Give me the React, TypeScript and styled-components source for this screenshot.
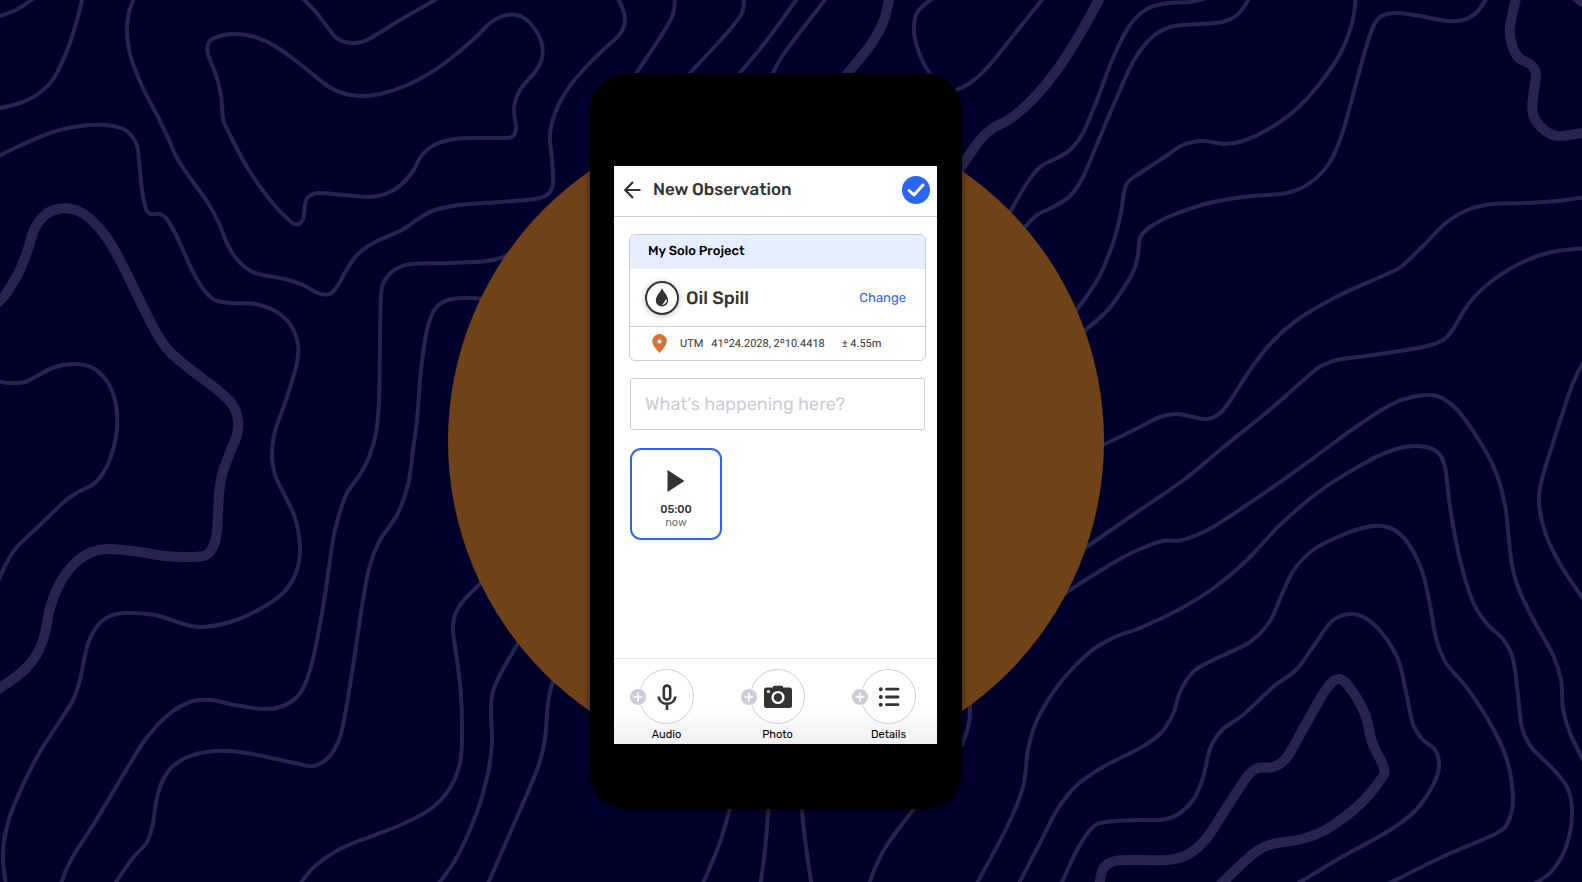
import React from "react";
import styled, { createGlobalStyle, css } from "styled-components";

type Point = [number, number];
interface Contour {
  points: Point[];
  heavy?: boolean;
  closed?: boolean;
}

const contours: Contour[] = [
  { points: [[-6, 17], [0, 16], [18, 9], [34, -2]] },
  { points: [[83, -4], [77, 20], [68, 48], [54, 78], [38, 94], [20, 103], [0, 108], [-6, 109]] },
  {
    points: [
      [135, -4], [129, 12], [127, 32], [131, 58], [143, 88], [158, 117], [169, 140], [176, 156], [188, 175],
      [206, 200], [218, 221], [226, 241], [235, 257], [249, 270], [263, 275], [285, 279], [303, 285], [318, 293],
      [330, 294], [338, 285], [347, 269], [358, 254], [375, 242], [402, 230], [418, 219], [435, 210], [460, 205],
      [500, 202], [535, 199], [548, 194], [553, 183], [552, 160], [550, 135], [555, 113], [567, 90], [585, 68],
      [603, 50], [620, 34], [625, 20], [622, 7], [617, -3],
    ],
  },
  { points: [[299, -5], [315, 11], [328, 28], [338, 39], [352, 43], [367, 40], [400, 20], [435, 0], [445, -6]] },
  {
    closed: true,
    points: [
      [209, 42], [220, 36], [237, 34], [255, 37], [275, 46], [300, 64], [325, 84], [342, 93], [360, 96],
      [380, 94], [405, 86], [430, 73], [450, 59], [475, 38], [490, 23], [503, 16], [517, 15], [530, 23], [541, 41],
      [542, 58], [535, 72], [520, 90], [514, 108], [516, 128], [513, 136], [505, 138], [480, 138], [455, 139],
      [436, 144], [422, 155], [413, 171], [402, 184], [388, 193], [370, 197], [345, 195], [318, 193], [308, 197],
      [305, 205], [303, 219], [298, 224], [290, 221], [270, 200], [247, 167], [227, 129], [223, 118], [221, 95],
      [216, 75], [208, 54],
    ],
  },
  {
    points: [
      [-5, 158], [15, 148], [50, 133], [80, 126], [105, 125], [125, 130], [136, 143], [139, 160], [142, 190],
      [146, 209], [151, 214], [160, 214], [167, 219], [177, 237], [192, 270], [204, 290], [215, 300], [230, 303],
      [255, 304], [275, 311], [290, 324], [298, 345], [296, 367], [285, 403], [275, 431], [272, 453], [275, 475],
      [285, 496], [295, 518], [300, 548], [296, 573], [283, 593], [260, 609], [230, 622], [200, 627], [180, 623],
      [155, 615], [127, 613], [110, 616], [98, 625], [89, 641], [84, 660], [80, 680], [73, 700], [60, 721],
      [37, 757], [14, 805], [5, 835], [3, 860], [6, 886],
    ],
  },
  {
    heavy: true,
    points: [
      [-6, 306], [5, 295], [18, 274], [27, 252], [34, 230], [45, 215], [58, 209], [72, 209], [88, 217],
      [107, 238], [123, 266], [140, 301], [157, 334], [170, 352], [190, 369], [215, 388], [232, 404], [238, 420],
      [237, 435], [231, 450], [222, 475], [219, 495], [217, 530], [214, 545], [206, 555], [190, 557], [165, 556],
      [140, 552], [110, 549], [92, 552], [75, 563], [60, 583], [50, 608], [45, 633], [37, 654], [22, 672],
      [0, 688], [-8, 693],
    ],
  },
  {
    points: [
      [-4, 381], [10, 383], [25, 382], [37, 376], [55, 367], [75, 364], [93, 368], [108, 383], [116, 405],
      [117, 428], [113, 450], [106, 468], [95, 483], [80, 491], [65, 501], [40, 525], [16, 548], [5, 566], [-3, 584],
    ],
  },
  {
    points: [
      [515, 250], [503, 257], [487, 261], [450, 263], [412, 264], [396, 269], [385, 280], [381, 295], [380, 340],
      [379, 400], [376, 433], [369, 457], [359, 476], [347, 493], [339, 515], [333, 540], [325, 595], [315, 650],
      [306, 682], [296, 698], [280, 707], [262, 709], [235, 705], [210, 700], [190, 702], [168, 715], [145, 740],
      [125, 772], [95, 822], [75, 853], [66, 870], [60, 887],
    ],
  },
  {
    points: [
      [485, 299], [466, 298], [448, 300], [435, 309], [427, 330], [421, 370], [417, 420], [413, 450], [408, 485],
      [397, 515], [380, 540], [370, 565], [363, 600], [354, 660], [345, 715], [339, 740], [328, 758], [313, 766],
      [295, 763], [267, 757], [240, 752], [215, 751], [190, 756], [172, 767], [162, 782], [156, 802], [153, 823],
      [147, 842], [132, 859], [114, 885],
    ],
  },
  {
    points: [
      [299, 886], [313, 868], [340, 849], [375, 835], [405, 823], [432, 808], [450, 788], [460, 763], [462, 735],
      [461, 695], [457, 660], [453, 630], [455, 615], [464, 600], [482, 582], [495, 570],
    ],
  },
  { points: [[437, 886], [457, 857], [477, 812], [488, 773], [492, 742], [491, 707], [496, 683], [517, 645], [526, 630]] },
  { points: [[487, 886], [510, 833], [537, 770], [545, 738], [548, 703], [553, 682], [562, 668]] },
  { points: [[675, -4], [673, 14], [663, 33], [637, 72], [630, 83]] },
  { points: [[744, -4], [742, 13], [727, 33], [690, 73], [680, 84]] },
  { points: [[799, -4], [767, 40], [740, 73], [731, 84]] },
  { points: [[828, -4], [800, 32], [781, 58], [773, 73], [768, 84]] },
  { heavy: true, points: [[890, -5], [884, 20], [872, 43], [848, 73], [838, 85]] },
  { points: [[936, -4], [918, 11], [914, 27], [916, 43], [923, 62], [930, 74], [938, 84]] },
  { points: [[1045, -4], [1013, 36], [987, 68], [970, 83], [956, 90], [945, 94]] },
  {
    heavy: true,
    points: [[1102, -6], [1080, 34], [1057, 70], [1033, 99], [1010, 119], [993, 128], [980, 140], [963, 164], [952, 182]],
  },
  {
    points: [
      [1000, 230], [1010, 212], [1027, 183], [1040, 167], [1057, 158], [1070, 150], [1083, 133], [1097, 100],
      [1113, 58], [1130, 25], [1147, 9], [1167, 3], [1190, 2], [1209, -3],
    ],
  },
  {
    points: [
      [1015, 240], [1025, 227], [1037, 215], [1053, 207], [1070, 196], [1083, 177], [1100, 137], [1117, 97],
      [1133, 62], [1150, 39], [1170, 27], [1200, 24], [1222, 22], [1237, 15], [1247, 2], [1250, -5],
    ],
  },
  {
    points: [
      [1356, -4], [1352, 23], [1340, 54], [1317, 87], [1293, 112], [1267, 130], [1243, 141], [1225, 144],
      [1203, 141], [1183, 145], [1163, 158], [1140, 173], [1128, 182], [1124, 192], [1121, 213], [1113, 243],
      [1100, 275], [1084, 300], [1070, 318],
    ],
  },
  {
    points: [
      [1488, -4], [1477, 12], [1463, 20], [1447, 21], [1420, 16], [1397, 13], [1380, 17], [1370, 35], [1357, 80],
      [1343, 131], [1330, 162], [1310, 183], [1287, 193], [1253, 196], [1213, 202], [1173, 215], [1150, 227],
      [1140, 238], [1138, 255], [1133, 272], [1117, 298], [1103, 315], [1078, 336],
    ],
  },
  {
    heavy: true,
    points: [
      [1517, -6], [1510, 27], [1512, 45], [1519, 58], [1530, 64], [1536, 74], [1533, 97], [1533, 114], [1542, 128],
      [1557, 136], [1582, 133], [1592, 130],
    ],
  },
  { heavy: true, points: [[1570, -8], [1590, 8]] },
  {
    points: [
      [1588, 197], [1557, 201], [1527, 203], [1493, 204], [1470, 209], [1447, 222], [1423, 246], [1402, 266],
      [1387, 274], [1340, 295], [1300, 318], [1273, 341], [1250, 370], [1230, 401], [1219, 414], [1207, 419],
      [1193, 417], [1177, 414], [1160, 417], [1140, 427], [1103, 445], [1088, 452],
    ],
  },
  {
    points: [
      [1588, 248], [1552, 252], [1523, 262], [1493, 280], [1470, 302], [1453, 329], [1443, 340], [1423, 347],
      [1373, 355], [1337, 360], [1321, 366], [1307, 377], [1273, 407], [1220, 450], [1185, 479], [1140, 510],
      [1088, 546], [1075, 555],
    ],
  },
  {
    points: [
      [1052, 603], [1067, 592], [1095, 574], [1120, 559], [1140, 549], [1163, 541], [1182, 540], [1213, 527],
      [1273, 487], [1323, 451], [1353, 429], [1390, 405], [1412, 397], [1430, 395], [1442, 398], [1460, 413],
      [1485, 450], [1497, 475], [1505, 505], [1509, 540], [1512, 565], [1518, 587], [1533, 619], [1553, 655],
      [1561, 680], [1563, 709], [1570, 733], [1588, 770],
    ],
  },
  {
    points: [
      [975, 887], [1007, 827], [1023, 787], [1028, 750], [1037, 720], [1060, 683], [1090, 652], [1115, 637],
      [1140, 628], [1180, 609], [1215, 587], [1247, 560], [1280, 525], [1320, 491], [1363, 464], [1393, 450],
      [1417, 446], [1436, 451], [1445, 467], [1450, 507], [1460, 560], [1473, 602], [1487, 624], [1503, 639],
      [1513, 659], [1518, 695], [1522, 728], [1532, 748], [1553, 769], [1568, 789], [1572, 815], [1566, 847],
      [1551, 872], [1530, 886],
    ],
  },
  {
    points: [
      [1017, 887], [1040, 843], [1057, 810], [1077, 785], [1103, 767], [1140, 748], [1160, 734], [1173, 714],
      [1180, 692], [1193, 672], [1213, 660], [1250, 642], [1270, 621], [1282, 594], [1294, 570], [1313, 550],
      [1340, 536], [1367, 527], [1387, 527], [1404, 538], [1421, 568], [1430, 605], [1436, 638], [1446, 663],
      [1467, 688], [1490, 723], [1507, 760], [1513, 799], [1508, 822], [1495, 834], [1440, 858], [1382, 887],
    ],
  },
  {
    points: [
      [1060, 887], [1076, 852], [1091, 829], [1105, 822], [1140, 820], [1160, 820], [1177, 815], [1193, 800],
      [1203, 778], [1210, 749], [1222, 730], [1243, 715], [1273, 687], [1296, 670], [1313, 647], [1332, 621],
      [1350, 614], [1367, 619], [1385, 637], [1399, 662], [1407, 697], [1413, 724], [1422, 739], [1435, 750],
      [1439, 766], [1433, 785], [1415, 811], [1387, 832], [1340, 858], [1292, 887],
    ],
  },
  {
    heavy: true,
    points: [
      [1099, 888], [1103, 869], [1115, 861], [1140, 860], [1167, 860], [1187, 855], [1206, 839], [1227, 807],
      [1247, 777], [1258, 768], [1273, 767], [1287, 757], [1307, 722], [1327, 688], [1339, 679], [1350, 688],
      [1365, 714], [1372, 742], [1384, 768], [1381, 779], [1360, 804], [1327, 829], [1302, 839], [1273, 844],
      [1253, 854], [1217, 888],
    ],
  },
  { points: [[1588, 355], [1573, 383], [1553, 443], [1542, 479], [1539, 502], [1545, 532], [1560, 564], [1588, 606]] },
  { points: [[732, 800], [729, 812], [719, 845], [701, 888]] },
  { points: [[769, 800], [768, 815], [765, 850], [760, 888]] },
  { points: [[801, 800], [802, 812], [806, 847], [812, 888]] },
  { points: [[923, 798], [913, 810], [887, 845], [875, 868], [868, 888]] },
  { points: [[970, 690], [970, 707], [969, 723], [962, 744], [950, 762]] },
];

/* Turns a list of survey points into a smooth cubic path (Catmull-Rom). */
function toPath({ points, closed }: Contour): string {
  const n = points.length;
  const at = (i: number): Point =>
    closed ? points[(i + n) % n] : points[Math.max(0, Math.min(n - 1, i))];
  let d = `M${points[0].join(" ")}`;
  const segments = closed ? n : n - 1;
  for (let i = 0; i < segments; i++) {
    const [a, b, c, e] = [at(i - 1), at(i), at(i + 1), at(i + 2)];
    const c1 = [b[0] + (c[0] - a[0]) / 6, b[1] + (c[1] - a[1]) / 6];
    const c2 = [c[0] - (e[0] - b[0]) / 6, c[1] - (e[1] - b[1]) / 6];
    d += `C${c1.join(" ")} ${c2.join(" ")} ${c.join(" ")}`;
  }
  return closed ? d + "Z" : d;
}

const color = {
  night: "#00002d",
  contour: "#272550",
  brown: "#704217",
  ink: "#333333",
  line: "#ccccd6",
  blue: "#2a66f5",
  sky: "#e5eeff",
  pin: "#d9703a",
};

const GlobalStyle = createGlobalStyle`
  *, *::before, *::after { box-sizing: border-box; }
  body {
    margin: 0;
    background: ${color.night};
    color: ${color.ink};
    font-family: "Rubik", "Roboto", sans-serif;
    text-rendering: geometricPrecision;
  }
  button { font: inherit; color: inherit; background: none; border: 0; padding: 0; cursor: pointer; }
`;

const Stage = styled.main`
  position: relative;
  display: grid;
  place-items: center;
  min-height: 100vh;
  padding-right: 30px;
  overflow: hidden;
`;

const ContourMap = styled.svg`
  position: absolute;
  inset: 0;
  width: 100%;
  height: 100%;
  fill: none;
  stroke: ${color.contour};
`;

const Disc = styled.div`
  position: relative;
  grid-area: 1 / 1;
  width: 656px;
  aspect-ratio: 1;
  border-radius: 50%;
  background: ${color.brown};
`;

const Phone = styled.div`
  position: relative;
  grid-area: 1 / 1;
  width: 372px;
  max-width: 100%;
  padding: 93px 25px 65px 24px;
  border-radius: 38px;
  background: #000;
  box-shadow: 0 2px 6px rgba(0, 0, 0, 0.5);
`;

const Screen = styled.div`
  display: flex;
  flex-direction: column;
  min-height: 578px;
  background: #fff;
`;

const Header = styled.header`
  display: flex;
  align-items: center;
  height: 51px;
  padding: 0 7px 2px 9px;
  border-bottom: 1px solid ${color.line};
`;

const Title = styled.h1`
  flex: 1;
  margin: 0 0 0 12px;
  font-size: 17px;
  line-height: 24px;
  font-weight: 500;
`;

const IconButton = styled.button`
  display: flex;
`;

const Body = styled.div`
  flex: 1;
  display: flex;
  flex-direction: column;
  gap: 17px;
  padding: 17px 11px 17px 15px;
`;

const Card = styled.section`
  border: 1px solid ${color.line};
  border-radius: 6px;
  overflow: hidden;
`;

const ProjectName = styled.h2`
  margin: 0;
  padding: 0 18px;
  background: ${color.sky};
  color: #000;
  font-size: 13px;
  line-height: 34px;
  font-weight: 500;
`;

const CategoryRow = styled.div`
  display: flex;
  align-items: center;
  gap: 7px;
  height: 58px;
  padding: 0 19px 0 15px;
  border-bottom: 1px solid ${color.line};
`;

const CategoryBadge = styled.span`
  display: grid;
  place-items: center;
  width: 34px;
  height: 34px;
  border: 2px solid ${color.ink};
  border-radius: 50%;
  box-shadow: 0 1px 6px rgba(0, 0, 0, 0.25);
`;

const CategoryName = styled.h3`
  flex: 1;
  margin: 0;
  font-size: 18px;
  line-height: 24px;
  font-weight: 500;
`;

const ChangeLink = styled.a`
  padding-top: 2px;
  color: ${color.blue};
  font-size: 13px;
  line-height: 20px;
  text-decoration: none;
`;

const LocationRow = styled.div`
  display: flex;
  align-items: center;
  height: 33px;
  padding-left: 22px;
  font-family: "Roboto", sans-serif;
  font-size: 11px;
  line-height: 16px;
`;

const Datum = styled.span<{ $gap: number }>`
  margin-left: ${({ $gap }) => $gap}px;
`;

const NoteInput = styled.input`
  height: 52px;
  margin: 0 1px;
  padding: 0 14px;
  border: 1px solid ${color.line};
  border-radius: 3px;
  background: #fff;
  color: ${color.ink};
  font: 400 18px/24px "Rubik", "Roboto", sans-serif;
  text-rendering: geometricPrecision;
  &::placeholder {
    color: ${color.line};
    opacity: 1;
  }
`;

const AudioTile = styled.button`
  display: flex;
  flex-direction: column;
  align-items: center;
  width: 92px;
  height: 92px;
  margin: 1px 1px 0;
  padding-top: 19px;
  border: 2px solid ${color.blue};
  border-radius: 11px;
`;

const tileText = css`
  font-size: 11px;
  line-height: 13px;
`;

const Duration = styled.span`
  ${tileText}
  margin-top: 10px;
  font-weight: 500;
`;

const Age = styled.span`
  ${tileText}
  color: #757575;
`;

const Toolbar = styled.nav`
  display: flex;
  justify-content: space-between;
  height: 86px;
  padding: 10px 21px 0 25px;
  border-top: 1px solid #e8e8ec;
  background: linear-gradient(#fff 55%, #f0f0f0);
`;

const Tool = styled.button`
  position: relative;
  display: flex;
  flex-direction: column;
  align-items: center;
  width: 55px;
`;

const ToolRing = styled.span`
  display: grid;
  place-items: center;
  width: 55px;
  height: 55px;
  border: 1px solid ${color.line};
  border-radius: 50%;
  background: #fff;
`;

const PlusBadge = styled.svg`
  position: absolute;
  left: -10px;
  top: 19px;
`;

const ToolLabel = styled.span`
  margin-top: 4px;
  color: #000;
  font-size: 11px;
  line-height: 14px;
`;

const BackIcon = () => (
  <svg width="18" height="20" viewBox="0 0 18 20" fill="none" stroke={color.ink} strokeWidth="2.2" aria-hidden>
    <path d="M17.5 10H2.5M10 2 2.2 10 10 18" />
  </svg>
);

const CheckIcon = () => (
  <svg width="28" height="28" viewBox="0 0 28 28" aria-hidden>
    <circle cx="14" cy="14" r="14" fill={color.blue} />
    <path d="m7 14.5 5 4.5 9-10" fill="none" stroke="#fff" strokeWidth="3" strokeLinecap="round" strokeLinejoin="round" />
  </svg>
);

const DropIcon = () => (
  <svg width="14" height="19" viewBox="0 0 14 19" aria-hidden>
    <path d="M7 0C5.5 4 .8 8 .8 12.4a6.2 6.2 0 0 0 12.4 0C13.2 8 8.5 4 7 0Z" fill={color.ink} />
    <path d="M11.6 11.8c0 2.7-1.5 4.4-4.2 4.8 1.3-1 2.2-2 2.6-3.4.3-.9.9-1.4 1.6-1.4Z" fill="#fff" stroke="#fff" strokeWidth=".6" />
  </svg>
);

const PinIcon = () => (
  <svg width="15" height="19" viewBox="0 0 15 19" aria-hidden>
    <path d="M7.5 0A7.3 7.3 0 0 0 .2 7.3C.2 12 7.5 19 7.5 19s7.3-7 7.3-11.7A7.3 7.3 0 0 0 7.5 0Z" fill={color.pin} />
    <circle cx="7.5" cy="7.5" r="2" fill="#fff" />
  </svg>
);

const PlayIcon = () => (
  <svg width="18" height="24" viewBox="0 0 18 24" aria-hidden>
    <path d="M.5 1 17.5 12 .5 23Z" fill={color.ink} />
  </svg>
);

const MicIcon = () => (
  <svg width="20" height="26" viewBox="0 0 20 26" fill="none" stroke={color.ink} strokeWidth="2.6" aria-hidden>
    <rect x="6.8" y="1.6" width="6.4" height="14" rx="3.2" />
    <path d="M1.6 12.5c.4 4.5 4 7.2 8.400 7.200s8-2.700 8.400-7.200M10 19.700V26" />
  </svg>
);

const CameraIcon = () => (
  <svg width="28" height="24" viewBox="0 0 28 24" aria-hidden>
    <path d="M2.5 2.5H9V2q0-1.2 1.2-1.2h7.6Q19 .8 19 2v.5h6.5Q28 2.500 28 5v15.500q0 2.500-2.500 2.500h-23Q0 23 0 20.500V5q0-2.500 2.500-2.500Z" fill={color.ink} />
    <circle cx="14" cy="12.500" r="5.400" fill="none" stroke="#fff" strokeWidth="2.400" />
    <circle cx="4.500" cy="6.500" r="1.600" fill="#fff" />
  </svg>
);

const ListIcon = () => (
  <svg width="22" height="20" viewBox="0 0 22 20" fill="none" stroke={color.ink} strokeWidth="2.800" strokeLinecap="round" aria-hidden>
    <path d="M8.500 2.200h11.500M8.500 10h11.500M8.500 17.700h11.500" />
    <path d="M2.800 2.200h.01M2.800 10h.01M2.800 17.700h.01" strokeWidth="4" />
  </svg>
);

const tools = [
  { label: "Audio", Icon: MicIcon },
  { label: "Photo", Icon: CameraIcon },
  { label: "Details", Icon: ListIcon },
];

export default function App() {
  return (
    <>
      <GlobalStyle />
      <Stage>
        <ContourMap viewBox="0 0 1582 882" preserveAspectRatio="xMidYMid slice" aria-hidden>
          {contours.map((contour, i) => (
            <path key={i} d={toPath(contour)} strokeWidth={contour.heavy ? 10 : 4} />
          ))}
        </ContourMap>
        <Disc />
        <Phone>
          <Screen>
            <Header>
              <IconButton type="button" aria-label="Back">
                <BackIcon />
              </IconButton>
              <Title>New Observation</Title>
              <IconButton type="button" aria-label="Save">
                <CheckIcon />
              </IconButton>
            </Header>
            <Body>
              <Card>
                <ProjectName>My Solo Project</ProjectName>
                <CategoryRow>
                  <CategoryBadge>
                    <DropIcon />
                  </CategoryBadge>
                  <CategoryName>Oil Spill</CategoryName>
                  <ChangeLink href="#change">Change</ChangeLink>
                </CategoryRow>
                <LocationRow>
                  <PinIcon />
                  <Datum $gap={13}>UTM</Datum>
                  <Datum $gap={8}>41º24.2028, 2º10.4418</Datum>
                  <Datum $gap={17}>± 4.55m</Datum>
                </LocationRow>
              </Card>
              <NoteInput type="text" aria-label="Description" placeholder="What’s happening here?" />
              <AudioTile type="button">
                <PlayIcon />
                <Duration>05:00</Duration>
                <Age>now</Age>
              </AudioTile>
            </Body>
            <Toolbar>
              {tools.map(({ label, Icon }) => (
                <Tool key={label} type="button">
                  <ToolRing>
                    <Icon />
                  </ToolRing>
                  <PlusBadge width="18" height="18" viewBox="0 0 18 18" aria-hidden>
                    <circle cx="9" cy="9" r="8.500" fill={color.line} stroke="#fff" />
                    <path d="M9 4.500v9M4.500 9h9" stroke="#fff" strokeWidth="1.600" />
                  </PlusBadge>
                  <ToolLabel>{label}</ToolLabel>
                </Tool>
              ))}
            </Toolbar>
          </Screen>
        </Phone>
      </Stage>
    </>
  );
}
